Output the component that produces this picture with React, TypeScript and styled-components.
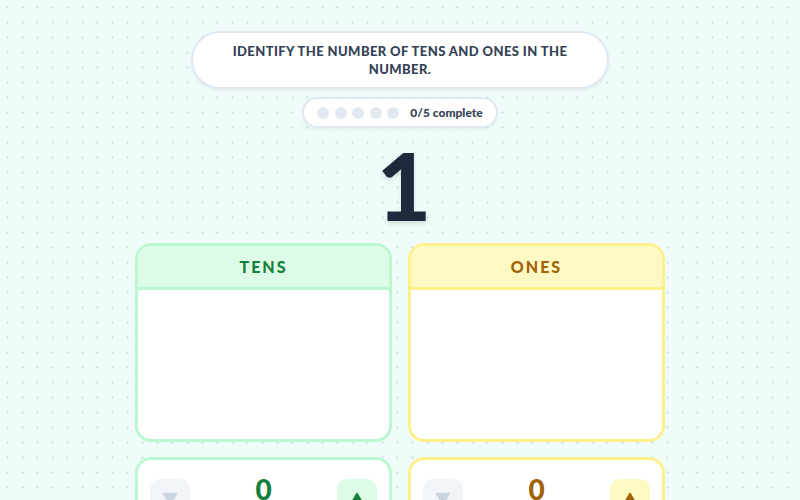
import React from 'react';
import styled, { createGlobalStyle } from 'styled-components';

const GlobalStyle = createGlobalStyle`
  html, body {
    margin: 0;
    padding: 0;
  }
  body {
    background-color: #effcf9;
    background-image: radial-gradient(circle, #cfe5e1 1px, transparent 1.3px);
    background-size: 15px 15px;
    background-position: 0px 0px;
    font-family: 'Lato', 'Inter', sans-serif;
    color: #334155;
    min-height: 500px;
  }
`;

const Page = styled.div`
  display: flex;
  flex-direction: column;
  align-items: center;
  padding-top: 31px;
  height: 500px;
  overflow: hidden;
  box-sizing: border-box;

  & > * {
    flex-shrink: 0;
  }
`;

const Prompt = styled.div`
  width: 418px;
  height: 58px;
  box-sizing: border-box;
  border: 2px solid #e2e8f0;
  border-radius: 999px;
  background: #fff;
  box-shadow: 0 2px 4px rgba(15, 23, 42, 0.06);
  display: flex;
  align-items: center;
  justify-content: center;
  text-align: center;
  padding: 0 36px;
  font-size: 13px;
  line-height: 18px;
  font-weight: 900;
  letter-spacing: 0.4px;
  text-transform: uppercase;
  color: #334155;
`;

const Progress = styled.div`
  margin-top: 8px;
  height: 31px;
  box-sizing: border-box;
  padding: 0 13px;
  border: 2px solid #e2e8f0;
  border-radius: 999px;
  background: #fff;
  box-shadow: 0 2px 4px rgba(15, 23, 42, 0.05);
  display: flex;
  align-items: center;
  gap: 11px;
`;

const Dots = styled.div`
  display: flex;
  gap: 5.5px;
`;

const Dot = styled.span<{ $done?: boolean }>`
  width: 12px;
  height: 12px;
  border-radius: 50%;
  background: ${p => (p.$done ? '#22c55e' : '#e2e8f0')};
`;

const ProgressLabel = styled.span`
  font-size: 12px;
  font-weight: 900;
  color: #334155;
`;

const Target = styled.div`
  margin-top: 7px;
  font-size: 94px;
  line-height: 100px;
  font-weight: 900;
  color: #1e293b;
  text-shadow: 0 3px 4px rgba(15, 23, 42, 0.12);
  padding-left: 8px;
`;

const Grid = styled.div`
  margin-top: 8px;
  display: grid;
  grid-template-columns: 257px 257px;
  column-gap: 16px;
  row-gap: 15px;
`;

type Tone = 'green' | 'yellow';

const tones = {
  green: { border: '#bbf7d0', head: '#dcfce7', text: '#15803d', btn: '#dcfce7' },
  yellow: { border: '#fef08a', head: '#fef9c3', text: '#a16207', btn: '#fef9c3' },
};

const Column = styled.div<{ $tone: Tone }>`
  height: 199px;
  box-sizing: border-box;
  border: 3px solid ${p => tones[p.$tone].border};
  border-radius: 16px;
  background: #fff;
  overflow: hidden;
  display: flex;
  flex-direction: column;
`;

const ColumnHead = styled.div<{ $tone: Tone }>`
  height: 44px;
  flex-shrink: 0;
  box-sizing: border-box;
  background: ${p => tones[p.$tone].head};
  border-bottom: 3px solid ${p => tones[p.$tone].border};
  color: ${p => tones[p.$tone].text};
  display: flex;
  align-items: center;
  justify-content: center;
  font-size: 16px;
  font-weight: 900;
  letter-spacing: 2px;
`;

const Counter = styled.div<{ $tone: Tone }>`
  height: 70px;
  box-sizing: border-box;
  border: 3px solid ${p => tones[p.$tone].border};
  border-radius: 16px;
  background: #fff;
  display: flex;
  align-items: flex-start;
  justify-content: space-between;
  padding: 19px 12px 0;
`;

const StepButton = styled.button<{ $bg: string; $fg: string }>`
  width: 40px;
  height: 40px;
  border: none;
  border-radius: 10px;
  background: ${p => p.$bg};
  color: ${p => p.$fg};
  display: flex;
  align-items: center;
  justify-content: center;
  padding: 0;
  cursor: pointer;
`;

const Value = styled.div<{ $tone: Tone }>`
  margin-top: -7px;
  font-size: 28px;
  font-weight: 900;
  color: ${p => tones[p.$tone].text};
`;

function Triangle({ down }: { down?: boolean }) {
  return (
    <svg width="16" height="14" viewBox="0 0 16 14" style={{ transform: down ? 'rotate(180deg)' : undefined }}>
      <path d="M8 1.5 L14.5 12.5 L1.5 12.5 Z" fill="currentColor" stroke="currentColor" strokeWidth="1.5" strokeLinejoin="round" />
    </svg>
  );
}

const places: { label: string; tone: Tone }[] = [
  { label: 'TENS', tone: 'green' },
  { label: 'ONES', tone: 'yellow' },
];

export default function App() {
  return (
    <>
      <GlobalStyle />
      <Page>
        <Prompt>Identify the number of tens and ones in the number.</Prompt>
        <Progress>
          <Dots>
            {[0, 1, 2, 3, 4].map(i => (
              <Dot key={i} />
            ))}
          </Dots>
          <ProgressLabel>0/5 complete</ProgressLabel>
        </Progress>
        <Target>1</Target>
        <Grid>
          {places.map(p => (
            <Column key={p.label} $tone={p.tone}>
              <ColumnHead $tone={p.tone}>{p.label}</ColumnHead>
            </Column>
          ))}
          {places.map(p => (
            <Counter key={p.label + '-c'} $tone={p.tone}>
              <StepButton $bg="#f1f5f9" $fg="#cbd5e1" aria-label="decrease">
                <Triangle down />
              </StepButton>
              <Value $tone={p.tone}>0</Value>
              <StepButton $bg={tones[p.tone].btn} $fg={tones[p.tone].text} aria-label="increase">
                <Triangle />
              </StepButton>
            </Counter>
          ))}
        </Grid>
      </Page>
    </>
  );
}
